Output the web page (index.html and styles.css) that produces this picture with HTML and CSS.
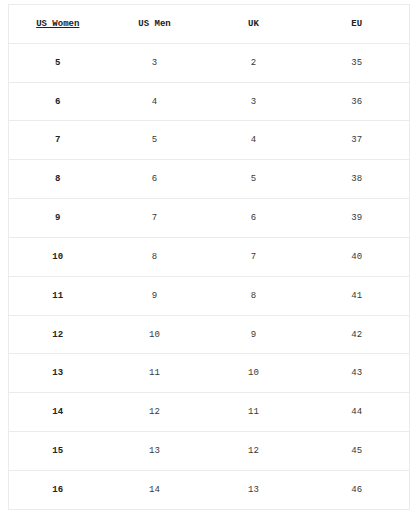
FILE: index.html
```html
<!DOCTYPE html>
<html>
<head>
<meta charset="utf-8">
<link rel="stylesheet" href="styles.css">
</head>
<body>
<table class="sizes">
  <colgroup>
    <col class="c1"><col class="c2"><col class="c3"><col class="c4">
  </colgroup>
  <thead>
    <tr><th><span class="ul">US Women</span></th><th>US Men</th><th>UK</th><th>EU</th></tr>
  </thead>
  <tbody>
    <tr><td>5</td><td>3</td><td>2</td><td>35</td></tr>
    <tr><td>6</td><td>4</td><td>3</td><td>36</td></tr>
    <tr><td>7</td><td>5</td><td>4</td><td>37</td></tr>
    <tr><td>8</td><td>6</td><td>5</td><td>38</td></tr>
    <tr><td>9</td><td>7</td><td>6</td><td>39</td></tr>
    <tr><td>10</td><td>8</td><td>7</td><td>40</td></tr>
    <tr><td>11</td><td>9</td><td>8</td><td>41</td></tr>
    <tr><td>12</td><td>10</td><td>9</td><td>42</td></tr>
    <tr><td>13</td><td>11</td><td>10</td><td>43</td></tr>
    <tr><td>14</td><td>12</td><td>11</td><td>44</td></tr>
    <tr><td>15</td><td>13</td><td>12</td><td>45</td></tr>
    <tr><td>16</td><td>14</td><td>13</td><td>46</td></tr>
  </tbody>
</table>
</body>
</html>
```
FILE: styles.css
```css
html, body {
  background: #ffffff;
}
body {
  margin: 4px 0 0 8px;
  font-family: "Liberation Mono", "Courier New", monospace;
  font-size: 9px;
  color: #383838;
}
.sizes {
  border-collapse: collapse;
  table-layout: fixed;
  width: 401px;
  border: 1px solid #ebebeb;
}
.c1 { width: 98px; }
.c2 { width: 96px; }
.c3 { width: 102px; }
.c4 { width: 105px; }
.sizes th,
.sizes td {
  height: 37.83px;
  padding: 0;
  text-align: center;
  vertical-align: middle;
  border-bottom: 1px solid #ebebeb;
}
.sizes th {
  font-weight: bold;
  color: #222;
}
.sizes td:first-child {
  font-weight: bold;
  color: #222;
}
.ul {
  text-decoration: underline;
}
```
